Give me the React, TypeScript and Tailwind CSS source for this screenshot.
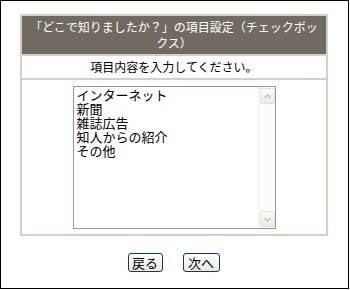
import React from "react";

const font = { fontFamily: '"MS PGothic", "Noto Sans CJK JP", sans-serif' };

const ITEMS = ["インターネット", "新聞", "雑誌広告", "知人からの紹介", "その他"];

function ScrollButton({ up }: { up?: boolean }) {
  return (
    <div className="flex h-[16px] w-[15px] items-center justify-center rounded-[2px] border border-[#e3e2da] bg-gradient-to-b from-[#fbfbf9] to-[#ecebe4]">
      <svg width="7" height="5" viewBox="0 0 7 5" className={up ? "" : "rotate-180"}>
        <path d="M0.5 4 L3.5 1 L6.5 4" fill="none" stroke="#c3c2ba" strokeWidth="1.5" />
      </svg>
    </div>
  );
}

function Btn({ label, w }: { label: string; w: string }) {
  return (
    <button
      type="button"
      className={`flex h-[19px] ${w} items-center justify-center rounded-[3px] border border-[#003c74] bg-gradient-to-b from-white to-[#ece9d8] text-[13px] leading-none text-black`}
    >
      {label}
    </button>
  );
}

export default function App() {
  return (
    <div style={font} className="h-[289px] w-[349px] border border-black bg-white">
      <div className="ml-[19px] mt-[13px] flex w-[308px] flex-col gap-[2px] bg-[#d4d0c8] p-[2px]">
        {/* 見出し */}
        <div className="h-[38px] bg-[#716a60] pt-[3px] text-center text-[12px] leading-[16px] text-white">
          「どこで知りましたか？」の項目設定（チェックボッ
          <br />
          クス）
        </div>

        <div className="flex h-[22px] items-center justify-center bg-white text-[12px] text-black">
          項目内容を入力してください。
        </div>

        {/* 入力欄 */}
        <div className="flex h-[154px] justify-center bg-white pt-[6px]">
          <div className="flex h-[143px] w-[203px] border border-[#7f9db9] bg-white">
            <div className="flex-1 pl-[3px] pt-[1px] text-[13px] leading-[14px] text-black">
              {ITEMS.map((t) => (
                <div key={t}>{t}</div>
              ))}
            </div>
            <div className="flex w-[17px] flex-col justify-between border-l border-[#f0efe8] bg-[#fcfcfa] p-px">
              <ScrollButton up />
              <ScrollButton />
            </div>
          </div>
        </div>
      </div>

      <div className="mt-[17px] flex justify-center gap-[20px] pr-[2px]">
        <Btn label="戻る" w="w-[35px]" />
        <Btn label="次へ" w="w-[37px]" />
      </div>
    </div>
  );
}
